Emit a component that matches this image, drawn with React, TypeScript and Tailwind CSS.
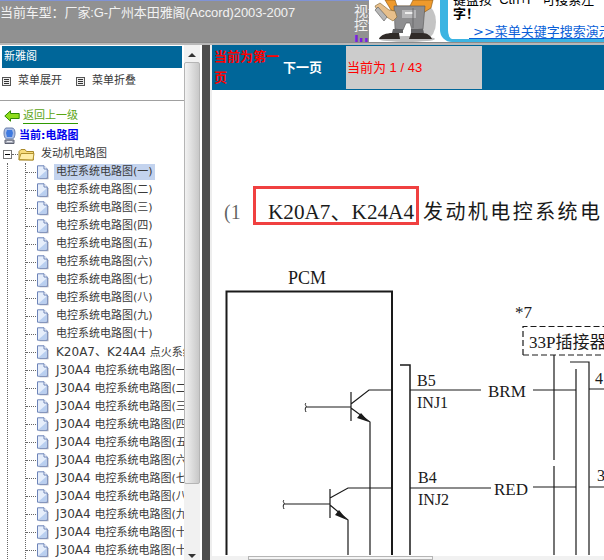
import React from 'react';

const cn = ['一', '二', '三', '四', '五', '六', '七', '八', '九', '十'];

const treeItems = [
  ...cn.map((n) => ({ code: '', name: `电控系统电路图(${n})` })),
  { code: 'K20A7、K24A4 ', name: '点火系统电路图' },
  ...cn.map((n) => ({ code: 'J30A4 ', name: `电控系统电路图(${n})` })),
  { code: 'J30A4 ', name: '电控系统电路图(十一)' },
  { code: 'J30A4 ', name: '电控系统电路图(十二)' },
];

const PageIcon = () => (
  <svg width="13" height="15" viewBox="0 0 13 15" className="shrink-0">
    <path d="M2.500 1.500h6l3 3v9h-9z" fill="#a9a9b5" transform="translate(1 .7)" />
    <path d="M1.500 .8h6.500l3.200 3.200v9.200H1.500z" fill="#e6eefb" stroke="#6d84b8" strokeWidth="1" />
    <path d="M2.500 12.500l8-7v7z" fill="#b9cff0" />
    <path d="M8 .8v3.200h3.200" fill="#fff" stroke="#6d84b8" strokeWidth="1" />
  </svg>
);

const MenuIcon = () => (
  <svg width="9" height="9" viewBox="0 0 9 9" className="shrink-0">
    <rect x=".5" y=".5" width="8" height="8" fill="#eee" stroke="#555" />
    <path d="M2 2.500h5M2 4.500h5M2 6.500h5" stroke="#333" />
  </svg>
);

const BackIcon = () => (
  <svg width="16" height="12" viewBox="0 0 16 12" className="shrink-0">
    <path d="M.8 6 6.500 .8v2.700h8.700v5H6.500v2.700z" fill="#8fdc1c" stroke="#2f8a00" strokeWidth="1" />
  </svg>
);

const ComputerIcon = () => (
  <svg width="13" height="18" viewBox="0 0 13 18" className="shrink-0">
    <path d="M3 1h6c2 0 3 2 3 5s-1 6-3 6H4C2 12 1 9 1 6s1-5 2-5z" fill="#a9bde6" stroke="#6a7ea8" />
    <path d="M4 3h5l1 3-1 4H4L3 6z" fill="#3f7ae0" />
    <path d="M2 13h9v3.500H2z" fill="#a7abb8" stroke="#5c6070" />
    <path d="M4 14.500h5" stroke="#e5e7ef" />
  </svg>
);

const FolderIcon = () => (
  <svg width="17" height="13" viewBox="0 0 17 13" className="shrink-0">
    <path d="M1 3.500 3 1.500h4l1.500 2H15.500v8.500H1z" fill="#f7dc7c" stroke="#a98a2c" />
    <path d="M1 11.500 3 5.500h13l-1 6.500z" fill="#ffeea8" stroke="#b2932f" />
  </svg>
);

const Mascot = () => (
  <svg width="71" height="42" viewBox="0 0 71 42" className="shrink-0">
    <ellipse cx="58" cy="22" rx="9" ry="16" fill="#c4c4c4" />
    <ellipse cx="38" cy="39" rx="28" ry="3" fill="#bdbdbd" />
    <path d="M16 0h10l2 6h13l3-6h20l-2 8-8 5H30l-8-3z" fill="#ef9a2c" stroke="#85500f" strokeWidth=".6" />
    <path d="M25 6h31l-2 23-11 1-2-7h-4l-3 7-8-1z" fill="#8e8e90" stroke="#555" strokeWidth=".6" />
    <path d="M33 10h14v8H33z" fill="#b6b6b8" />
    <path d="M36 13h8" stroke="#eee" strokeWidth="2" />
    <path d="M44 8v20" stroke="#6a6a6c" />
    <path d="M6 6l5-3 9 7 6 1 2 6-4 4-8-5-6-2z" fill="#e7bf8b" stroke="#80632f" strokeWidth=".6" />
    <path d="M6 10l3-3 9 10-3 4z" fill="#b7b7b7" stroke="#555" strokeWidth=".6" />
    <path d="M24 29h10v4H23zM42 29h12l1 4H42z" fill="#5f5f61" />
    <path d="M10 39c1-4 8-6 13-6h7l1 6zM40 39l2-6h12c4 0 8 3 9 6z" fill="#302b28" />
  </svg>
);

const Schematic = () => (
  <svg viewBox="212 90 392 466" width="392" height="466" className="block">
    <g fill="none" stroke="#1a1a1a">
      <path d="M226.500 555V291.500H392V555" strokeWidth="2" />
      <path d="M400 365h10V555" strokeWidth="1.500" />
      <path d="M554 355V460M554 466V555" strokeWidth="1.200" />
      <path d="M570 362h19V555M576 369V555" strokeWidth="1.200" />
      <path d="M523 355V326.500H604" strokeWidth="1.200" strokeDasharray="6 3" />
      <path d="M523 355H604" strokeWidth="1.200" strokeDasharray="6 3" />
      <path d="M410 390h71M533 390h43M589 389h15M410 488h81M533 487h43M589 487h15" strokeWidth="1.200" />
      <path d="M351 392v29M306 407h45M351 404l18-14h23M351 408l19 14v133" strokeWidth="1.200" />
      <path d="M330 489v29M284 504h46M330 498l18-10h44M330 505l18 15v35" strokeWidth="1.200" />
      <path d="M306 403c-2 2 1 3 0 4s-1 3 0 5M284 500c-2 2 1 3 0 4s-1 3 0 5" strokeWidth="1" />
    </g>
    <path d="M369 422l-12-4 4-5zM347 520l-12-5 4-5z" fill="#1a1a1a" />
    <rect x="254.500" y="187.500" width="163" height="36" fill="none" stroke="#f04040" strokeWidth="3" />
    <g fill="#1a1a1a" fontFamily="'Liberation Serif','Noto Sans CJK SC',serif">
      <text x="224" y="219" fontSize="20" fillOpacity=".7">(1</text>
      <text x="268" y="219" fontSize="21" textLength="146" lengthAdjust="spacingAndGlyphs">K20A7、K24A4</text>
      <text x="423" y="219" fontSize="20" textLength="177">发动机电控系统电</text>
      <text x="288" y="284" fontSize="18">PCM</text>
      <text x="515" y="318" fontSize="17">*7</text>
      <text x="529" y="348" fontSize="17">33P插接器</text>
      <text x="417" y="386" fontSize="16">B5</text>
      <text x="417" y="408" fontSize="16">INJ1</text>
      <text x="488" y="397" fontSize="17">BRM</text>
      <text x="595" y="384" fontSize="16">4</text>
      <text x="418" y="483" fontSize="16">B4</text>
      <text x="418" y="505" fontSize="16">INJ2</text>
      <text x="494" y="495" fontSize="17">RED</text>
      <text x="597" y="481" fontSize="16">3</text>
    </g>
  </svg>
);

export default function App() {
  return (
    <div className="w-[604px] h-[560px] overflow-hidden bg-white font-['DejaVu_Sans','Noto_Sans_CJK_SC',sans-serif] text-[11px] text-[#3a3a3a]">
      {/* top bar */}
      <div className="flex h-[43px] overflow-hidden border-b border-[#8a8a8a]">
        <div className="w-[354px] bg-[#919191] border-t border-[#8093d6] pt-[3px] text-[13px] leading-[18px] tracking-[-0.1px] text-[#f2f2f2] whitespace-nowrap font-['Liberation_Sans','Noto_Sans_CJK_SC',sans-serif]">
          当前车型：厂家:G-广州本田雅阁(Accord)2003-2007
        </div>
        <div className="w-[15px] bg-[#919191] border-t border-[#8093d6] overflow-hidden whitespace-nowrap pt-[3px] text-[14px] leading-[14px] text-[#f2f2f2]">
          <div>视频</div>
          <div>控制</div>
          <div className="mt-[2px] text-[#7a1fe0] font-bold">lu</div>
        </div>
        <div className="flex flex-1 bg-white overflow-hidden">
          <Mascot />
          <div className="flex-1 h-[42px] border-l-[8px] border-b-[3px] border-[#3cb4e2] rounded-bl-[12px] pl-[5px] overflow-hidden">
            <div className="-mt-[7px] text-[13px] leading-[14px] text-black whitespace-nowrap font-['Liberation_Sans','Noto_Sans_CJK_SC',sans-serif]">
              键盘按 &nbsp;Ctrl+F &nbsp;可搜索左
            </div>
            <div className="text-[13px] leading-[14px] text-black font-bold">字！</div>
            <div className="ml-[16px] mt-[4px] pl-[4px] border-b-2 border-[#0a5fd8] text-[13px] leading-[13px] text-[#0a5fd8] whitespace-nowrap">&gt;&gt;菜单关键字搜索演示</div>
          </div>
        </div>
      </div>

      <div className="h-[2px] bg-[#b8b8b8]" />

      <div className="flex h-[515px]">
        {/* left menu */}
        <div className="flex w-[202px] shrink-0">
          <div className="w-[184px] overflow-hidden">
            <div className="mx-[2px] mt-px h-[22px] bg-[#006699] pl-[2px] leading-[22px] text-white">新雅阁</div>
            <div className="flex items-center h-[24px] mt-[1px] pl-[2px]">
              <MenuIcon />
              <span className="ml-[7px] w-[58px]">菜单展开</span>
              <MenuIcon />
              <span className="ml-[7px]">菜单折叠</span>
            </div>
            <div className="mt-[7px] h-px bg-[#a0a0a0]" />
            <div className="flex items-center h-[16px] mt-[7px] pl-[4px] gap-[3px]">
              <BackIcon />
              <span className="text-[#5aa514] border-b border-[#2f9a00] leading-[15px]">返回上一级</span>
            </div>
            <div className="flex items-center h-[20px] mt-[2px] pl-[3px] gap-[3px] font-bold text-[#0000ee]">
              <ComputerIcon />
              <span>当前:电路图</span>
            </div>
            <div className="flex items-center h-[18px] mt-[-1px] pl-[3px]">
              <span className="w-[9px] h-[9px] border border-[#777] flex items-center justify-center bg-white shrink-0">
                <span className="w-[5px] h-px bg-black" />
              </span>
              <span className="w-[6px] border-t border-dotted border-[#666]" />
              <FolderIcon />
              <span className="ml-[6px]">发动机电路图</span>
            </div>
            <div className="ml-[7px] border-l border-dotted border-[#666]">
              <div className="ml-[17px] border-l border-dotted border-[#666]">
                {treeItems.map((item, i) => (
                  <div key={i} className="flex items-center h-[18px]">
                    <span className="w-[10px] border-t border-dotted border-[#666] shrink-0" />
                    <PageIcon />
                    <span className={`ml-[5px] px-[2px] leading-[16px] whitespace-nowrap ${i === 0 ? 'bg-[#c3d3ee]' : ''}`}>
                      {item.code && <span className="text-[12px]">{item.code}</span>}
                      {item.name}
                    </span>
                  </div>
                ))}
              </div>
            </div>
          </div>
          {/* scrollbar */}
          <div className="flex flex-col w-[16px] bg-[#f1f1f1] pt-[2px]">
            <div className="flex h-[15px] items-center justify-center">
              <span className="border-x-[4px] border-b-[4px] border-x-transparent border-b-[#333]" />
            </div>
            <div className="h-[422px] border border-[#b5b5b5] rounded-[2px] bg-gradient-to-r from-[#f2f2f2] to-[#c8c8c8]" />
            <div className="flex flex-1 items-end justify-center pb-[2px]">
              <span className="border-x-[4px] border-t-[4px] border-x-transparent border-t-[#333]" />
            </div>
          </div>
          <div className="w-[2px] bg-white" />
        </div>

        <div className="w-[8px] bg-[#4d4d4d] shrink-0" />
        <div className="w-[2px] bg-[#eeeeee] shrink-0" />

        {/* right panel */}
        <div className="flex flex-col flex-1 min-w-0">
          <div className="flex h-[45px] bg-[#006699] shrink-0">
            <div className="w-[71px] pl-[2px] pr-[4px] pt-[1px] text-[13px] leading-[21px] font-bold text-[#ff0000]">当前为第一页</div>
            <div className="w-[63px] flex items-center text-[13px] font-bold text-white pt-[1px]">下一页</div>
            <div className="w-[136px] my-[1px] bg-[#cccccc] flex items-center pl-px text-[13px] text-[#ff0000] font-['Liberation_Sans','Noto_Sans_CJK_SC',sans-serif]">当前为 1 / 43</div>
          </div>
          <div className="flex-1 overflow-hidden">
            <Schematic />
          </div>
          <div className="flex h-[4px] bg-[#f1f1f1] pl-[36px] shrink-0">
            <div className="w-[185px] border border-[#b5b5b5] bg-[#f4f4f4]" />
          </div>
        </div>
      </div>
    </div>
  );
}
